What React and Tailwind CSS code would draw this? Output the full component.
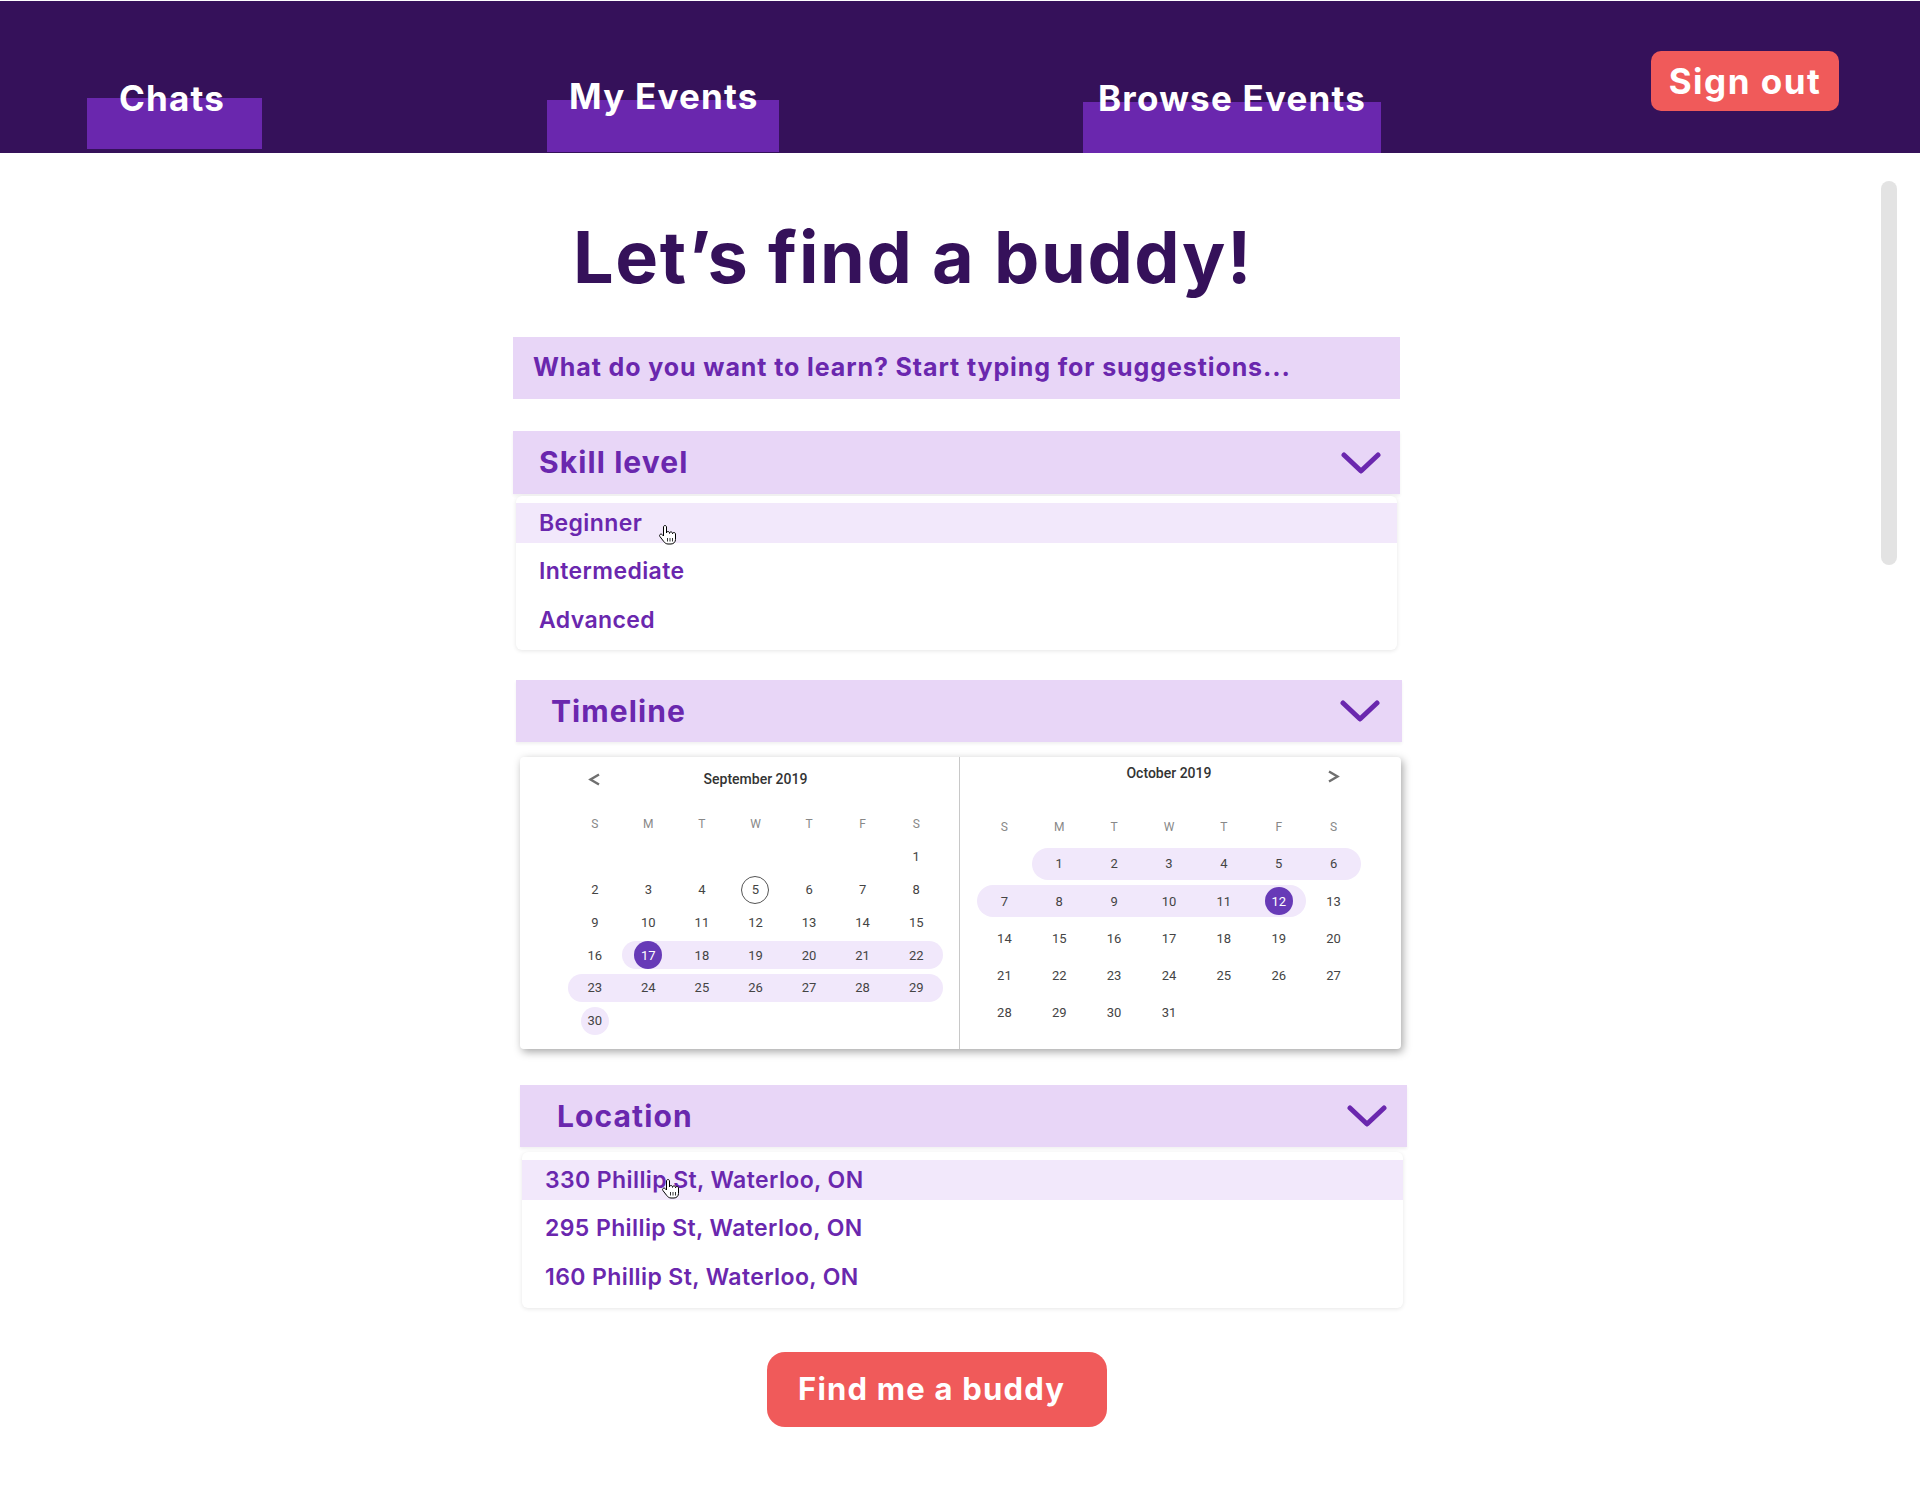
import React from "react";

const sept = [
  [null, null, null, null, null, null, 1],
  [2, 3, 4, 5, 6, 7, 8],
  [9, 10, 11, 12, 13, 14, 15],
  [16, 17, 18, 19, 20, 21, 22],
  [23, 24, 25, 26, 27, 28, 29],
  [30, null, null, null, null, null, null],
];

const oct = [
  [null, 1, 2, 3, 4, 5, 6],
  [7, 8, 9, 10, 11, 12, 13],
  [14, 15, 16, 17, 18, 19, 20],
  [21, 22, 23, 24, 25, 26, 27],
  [28, 29, 30, 31, null, null, null],
];

const weekdays = ["S", "M", "T", "W", "T", "F", "S"];

function Chevron() {
  return (
    <svg width="40" height="22" viewBox="0 0 40 22" fill="none">
      <polyline
        points="3,3 20,19 37,3"
        stroke="#6a27ae"
        strokeWidth="5"
        strokeLinecap="round"
        strokeLinejoin="round"
      />
    </svg>
  );
}

function Arrow({ dir }) {
  return (
    <svg width="13" height="13" viewBox="0 0 13 13" fill="none">
      <polyline
        points={dir === "left" ? "11,1.5 2.5,6.5 11,11.5" : "2,1.5 10.5,6.5 2,11.5"}
        stroke="#6f6f6f"
        strokeWidth="2.4"
      />
    </svg>
  );
}

function Hand() {
  return (
    <svg width="18" height="22" viewBox="0 0 18 22">
      <path
        d="M6 1.5c-.8 0-1.5.7-1.5 1.5v9l-1.3-1.4c-.6-.6-1.6-.7-2.2-.1-.6.5-.6 1.4-.1 2l4 5.2c.9 1.2 2.3 2.3 4.1 2.3h3c2.5 0 4.5-2 4.5-4.5V10c0-.8-.7-1.5-1.5-1.5s-1.5.7-1.5 1.5v-.6c0-.8-.7-1.5-1.5-1.5s-1.5.7-1.5 1.5V9c0-.8-.7-1.5-1.5-1.5S7.5 8.2 7.5 9V3c0-.8-.7-1.5-1.5-1.5z"
        fill="white"
        stroke="black"
        strokeWidth="1"
      />
      <path d="M8.5 14v3.5M11 14v3.5M13.5 14v3.5" stroke="black" strokeWidth="0.8" />
    </svg>
  );
}

function Month({ rows, inRange, selected, today, endDot, rowH, gap }) {
  return (
    <div className="grid grid-cols-7" style={{ rowGap: gap }}>
      {rows.map((row, r) =>
        row.map((day, i) => {
          const on = day !== null && inRange(day);
          const prevOn = i > 0 && row[i - 1] !== null && inRange(row[i - 1]);
          const nextOn = i < 6 && row[i + 1] !== null && inRange(row[i + 1]);
          let cls = "flex items-center justify-center";
          if (on) {
            cls += " bg-[#f1e8fb]";
            if (!prevOn) cls += " rounded-l-full";
            if (!nextOn) cls += " rounded-r-full";
          }
          let circle = "w-7 h-7 rounded-full flex items-center justify-center";
          if (day === selected) circle += " bg-[#673ab7] text-white";
          else if (day === today) circle += " border border-[#555]";
          else if (day === endDot) circle += " bg-[#f1e8fb]";
          return (
            <div key={r + "-" + i} className={cls} style={{ height: rowH }}>
              {day !== null && <span className={circle}>{day}</span>}
            </div>
          );
        })
      )}
    </div>
  );
}

function Calendar() {
  return (
    <div className="ml-[7px] mt-[15px] w-[881px] h-[292px] flex bg-white rounded-[4px] shadow-[2px_3px_8px_rgba(0,0,0,0.35)] font-['Roboto',sans-serif] text-[13px] text-[#444]">
      <div className="w-[440px] border-r border-[#c8c8c8] pl-[48px] pr-[16px]">
        <div className="grid grid-cols-7 h-[44px] items-center">
          <div className="flex justify-center">
            <Arrow dir="left" />
          </div>
          <div className="col-span-5 text-center text-[14px] font-medium text-[#333]">
            September 2019
          </div>
        </div>
        <div className="grid grid-cols-7 mt-[9px] h-[28px] items-center text-[12px] text-[#888]">
          {weekdays.map((w, i) => (
            <div key={i} className="text-center">
              {w}
            </div>
          ))}
        </div>
        <div className="mt-[5px]">
          <Month
            rows={sept}
            inRange={(d) => d >= 17 && d <= 29}
            selected={17}
            today={5}
            endDot={30}
            rowH={28}
            gap={4.8}
          />
        </div>
      </div>
      <div className="w-[441px] pl-[17px] pr-[40px]">
        <div className="grid grid-cols-7 h-[32px] items-center">
          <div />
          <div className="col-span-5 text-center text-[14px] font-medium text-[#333]">
            October 2019
          </div>
          <div className="flex justify-center pt-[6px]">
            <Arrow dir="right" />
          </div>
        </div>
        <div className="grid grid-cols-7 mt-[24px] h-[28px] items-center text-[12px] text-[#888]">
          {weekdays.map((w, i) => (
            <div key={i} className="text-center">
              {w}
            </div>
          ))}
        </div>
        <div className="mt-[7px]">
          <Month
            rows={oct}
            inRange={(d) => d >= 1 && d <= 12}
            selected={12}
            rowH={32}
            gap={5.3}
          />
        </div>
      </div>
    </div>
  );
}

function Options({ items, className, cursorPos }) {
  return (
    <div
      className={
        "bg-white rounded-[6px] shadow-[0_1px_4px_rgba(0,0,0,0.1)] flex flex-col gap-[8.5px] " +
        className
      }
    >
      {items.map((item, i) => (
        <div
          key={item}
          className={
            "relative h-[40px] flex items-center pl-[23px] text-[23px] font-semibold tracking-[0.4px] text-[#6a27ae] " +
            (i === 0 ? "bg-[#f2e8fb]" : "")
          }
        >
          {item}
          {i === 0 && (
            <span className={"absolute " + cursorPos}>
              <Hand />
            </span>
          )}
        </div>
      ))}
    </div>
  );
}

function Bar({ label, className }) {
  return (
    <div
      className={
        "h-[62px] bg-[#e8d6f7] flex items-center justify-between shadow-[0_2px_3px_rgba(0,0,0,0.06)] " +
        className
      }
    >
      <span className="text-[30px] font-bold tracking-[1.1px] text-[#6a27ae]">{label}</span>
      <Chevron />
    </div>
  );
}

export default function App() {
  return (
    <div className="relative min-h-[1488px] bg-white font-['Inter',sans-serif]">
      <header className="h-[153px] bg-[#35115a] border-t border-white flex items-start text-white font-bold tracking-[1.2px]">
        <div className="ml-[87px] mt-[97px] w-[175px] h-[51px] bg-[#6a27ae]">
          <span className="block -mt-[17px] pl-[32px] text-[35px] leading-none whitespace-nowrap">
            Chats
          </span>
        </div>
        <div className="ml-[285px] mt-[99px] w-[232px] h-[52px] bg-[#6a27ae]">
          <span className="block -mt-[21px] pl-[22px] text-[35px] leading-none whitespace-nowrap">
            My Events
          </span>
        </div>
        <div className="ml-[304px] mt-[101px] w-[298px] h-[51px] bg-[#6a27ae]">
          <span className="block -mt-[21px] pl-[15px] text-[35px] leading-none whitespace-nowrap">
            Browse Events
          </span>
        </div>
        <button className="ml-[270px] mt-[50px] w-[188px] h-[60px] rounded-[10px] bg-[#f05a5a] flex items-center justify-center text-[35px] leading-none tracking-[1.5px]">
          Sign out
        </button>
      </header>

      <main className="ml-[513px] w-[894px] pb-[61px]">
        <h1 className="ml-[60px] mt-[68px] text-[72px] leading-none font-bold text-[#35115a] tracking-[0.022em]">
          Let’s find a buddy!
        </h1>

        <div className="mt-[44px] w-[887px] h-[62px] bg-[#e8d6f7] flex items-center pl-[20px] text-[25px] font-bold tracking-[0.9px] text-[#6a27ae] whitespace-nowrap">
          What do you want to learn? Start typing for suggestions...
        </div>

        <Bar label="Skill level" className="mt-[32px] w-[887px] h-[63px] pl-[26px] pr-[19px]" />
        <Options
          items={["Beginner", "Intermediate", "Advanced"]}
          className="mt-[2px] ml-[3px] w-[881px] pt-[7px] pb-[10px]"
          cursorPos="left-[143px] top-[21px]"
        />

        <Bar label="Timeline" className="mt-[30px] ml-[3px] w-[886px] pl-[35px] pr-[22px]" />
        <Calendar />

        <Bar label="Location" className="mt-[36px] ml-[7px] w-[887px] pl-[37px] pr-[20px]" />
        <Options
          items={[
            "330 Phillip St, Waterloo, ON",
            "295 Phillip St, Waterloo, ON",
            "160 Phillip St, Waterloo, ON",
          ]}
          className="mt-[5px] ml-[9px] w-[881px] pt-[8px] pb-[11px]"
          cursorPos="left-[140px] top-[18px]"
        />

        <button className="mt-[44px] ml-[254px] w-[340px] h-[75px] rounded-[18px] bg-[#f05a5a] flex items-center pl-[31px] text-[31px] font-bold tracking-[1.2px] text-white">
          Find me a buddy
        </button>
      </main>

      <div className="absolute left-[1881px] top-[181px] w-[16px] h-[384px] rounded-full bg-[#e3e3e3]" />
    </div>
  );
}
